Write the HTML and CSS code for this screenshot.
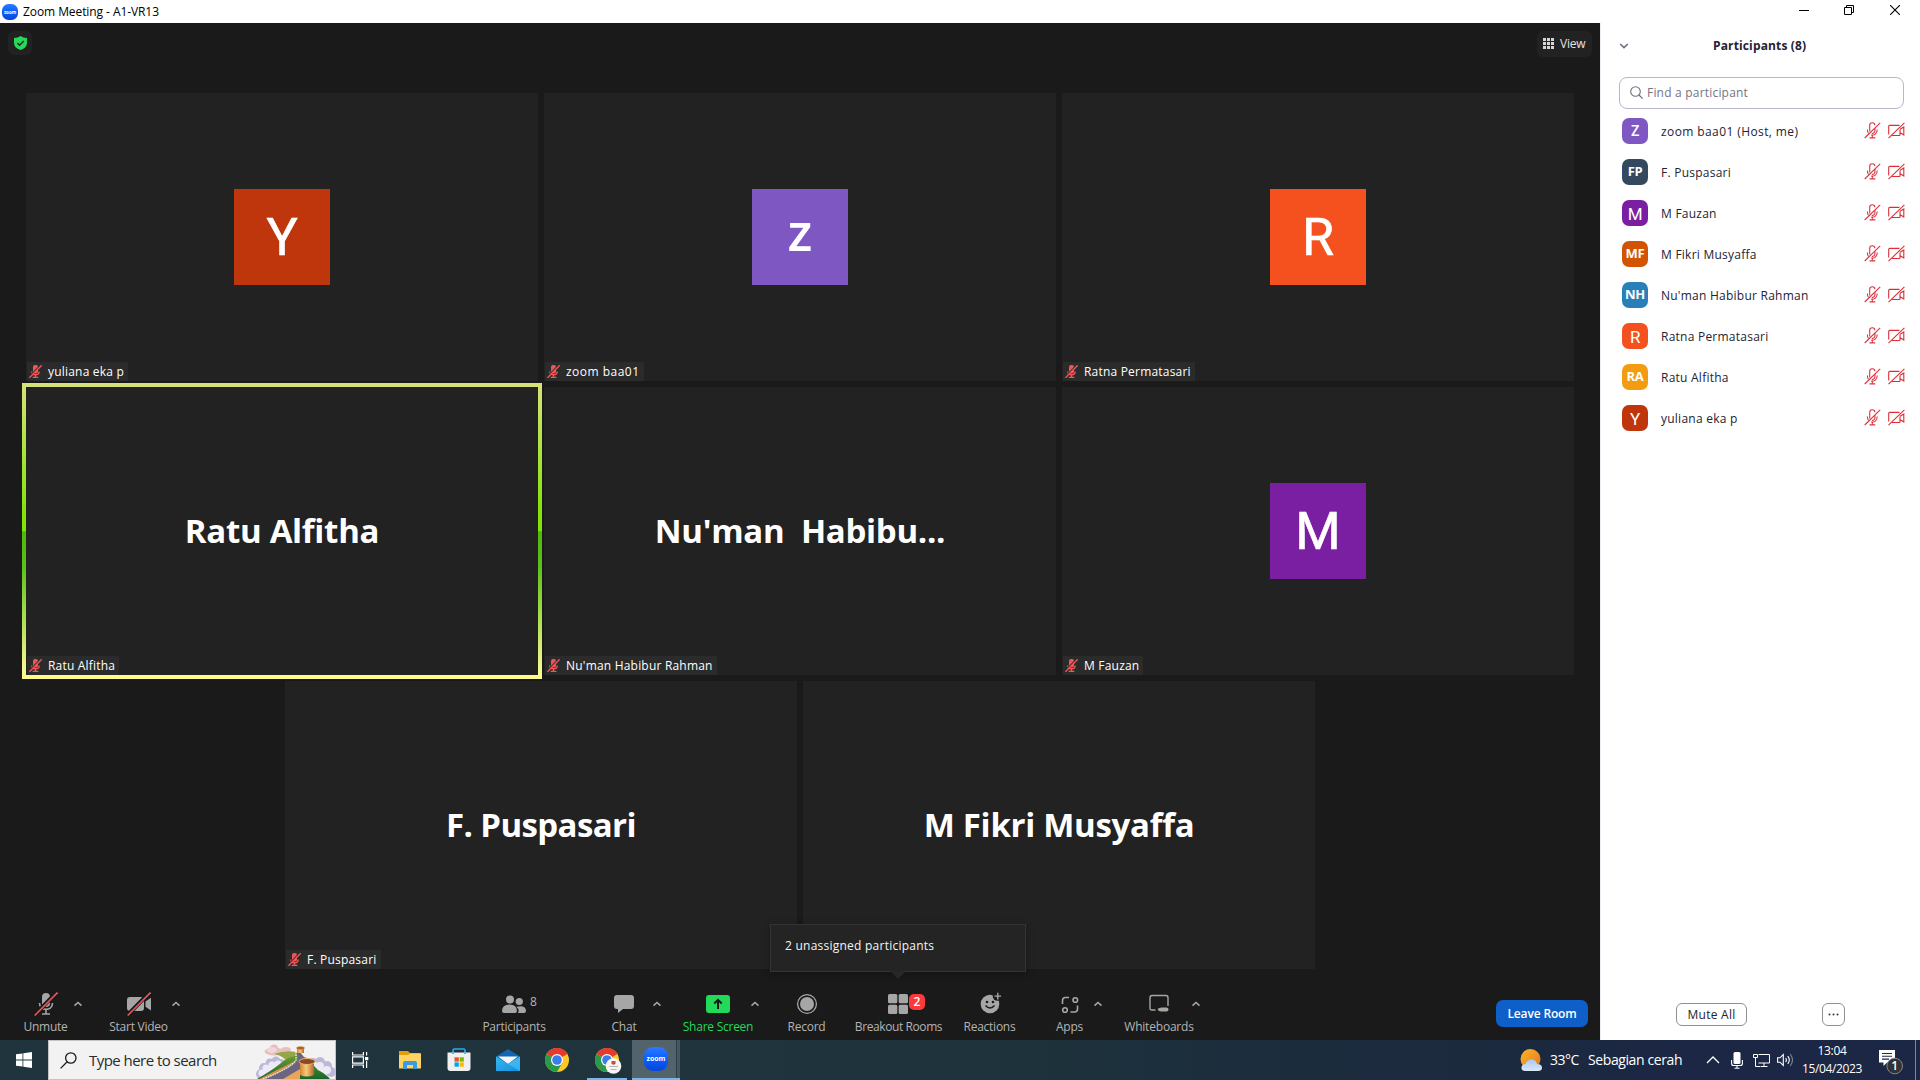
FILE: index.html
```html
<!DOCTYPE html>
<html lang="en">
<head>
<meta charset="utf-8">
<title>Zoom Meeting - A1-VR13</title>
<link rel="stylesheet" href="styles.css">
</head>
<body>
<svg class="defs" aria-hidden="true">
  <defs>
    <symbol id="mic-muted" viewBox="0 0 13 13">
      <rect x="4" y="0" width="5" height="8.500" rx="2" fill="#f25555"/>
      <path d="M2.800 6.500c0 4.400 7.400 4.400 7.400 0M6.500 9.500v3M3.600 12.400h5.800" fill="none" stroke="#f25555" stroke-width="1.400"/>
      <path d="M0.200 11.600L11.400 .2" stroke="#2b2b2b" stroke-width="1.200"/>
      <path d="M0.400 12.800L12.700 .3" stroke="#f25555" stroke-width="1.400"/>
    </symbol>
    <symbol id="mic-off" viewBox="0 0 17 17">
      <g fill="none" stroke="#dd3340" stroke-width="1.1">
        <path d="M5.700 9.500V3.300a2.600 2.600 0 0 1 5.200 0M10.900 6v3a2.600 2.600 0 0 1-3 2.400M3.400 7.500c0 2 .3 3 1.200 4M13.200 7.500c0 4.400-3 6.200-6 5.500M8.300 13v2.500M5.500 15.900h5.800"/>
        <path d="M.7 16L16.200 .9"/>
      </g>
    </symbol>
    <symbol id="cam-off" viewBox="0 0 17 17">
      <g fill="none" stroke="#dd2e35" stroke-width="1.100">
        <path d="M.7 12.500V4.400q0-1 1-1h9.800M12 7.500v5.500q0 .5-.6 .500H4M12.200 7.300l3.600-2.300v8l-3.600-2.200"/>
        <path d="M.5 16.200L16.400 .9"/>
      </g>
    </symbol>
    <symbol id="caret" viewBox="0 0 10 6"><path d="M1.500 4.600L5 1.500l3.500 3.100" fill="none" stroke="#a9a9a9" stroke-width="1.500"/></symbol>
    <symbol id="chrome" viewBox="0 0 24 24">
      <circle cx="12" cy="12" r="12" fill="#fdc928"/>
      <path d="M12 12L1.600 6A12 12 0 0 1 22.400 6Z" fill="#e33b2e"/>
      <path d="M12 6h10.400A12 12 0 0 0 12 0Z" fill="#e33b2e"/>
      <path d="M1.600 6A12 12 0 0 0 12 24l5.200-9L12 12Z" fill="#2a9a48"/>
      <circle cx="12" cy="12" r="6" fill="#fff"/>
      <circle cx="12" cy="12" r="4.800" fill="#3b7ded"/>
    </symbol>
    <linearGradient id="zoomBlue" x1="0" y1="0" x2="0" y2="1"><stop offset="0" stop-color="#2b7bff"/><stop offset=".5" stop-color="#0b5cff"/><stop offset="1" stop-color="#0846d6"/></linearGradient>
    <linearGradient id="mailBlue" x1="0" y1="0" x2="1" y2="1"><stop offset="0" stop-color="#35b8f1"/><stop offset="1" stop-color="#1490df"/></linearGradient>
    <linearGradient id="sun" x1="0" y1="0" x2="1" y2="1"><stop offset="0" stop-color="#f8b928"/><stop offset="1" stop-color="#ea7020"/></linearGradient>
    <linearGradient id="cloud" x1="0" y1="0" x2="0" y2="1"><stop offset="0" stop-color="#a9c9f6"/><stop offset="1" stop-color="#dbe8fb"/></linearGradient>
    <linearGradient id="tower" x1="0" y1="0" x2="1" y2="0"><stop offset="0" stop-color="#d58333"/><stop offset=".45" stop-color="#f8c978"/><stop offset="1" stop-color="#b96528"/></linearGradient>
    <linearGradient id="hill" x1="0" y1="0" x2="0" y2="1"><stop offset="0" stop-color="#6f9c35"/><stop offset="1" stop-color="#17672c"/></linearGradient>
  </defs>
</svg>

<header class="titlebar">
  <svg class="app-icon" viewBox="0 0 16 16"><rect width="16" height="16" rx="6.500" fill="url(#zoomBlue)"/><text x="8" y="9.600" class="app-icon-text" text-anchor="middle">zoom</text></svg>
  <span class="title">Zoom Meeting - A1-VR13</span>
  <div class="win-buttons">
    <svg width="10" height="10" viewBox="0 0 10 10"><path d="M0 5.500h10" stroke="#000"/></svg>
    <svg width="10" height="10" viewBox="0 0 10 10"><path d="M.5 2.500h7v7h-7zM2.500 2.500v-2h7v7h-2" fill="none" stroke="#000"/></svg>
    <svg width="10" height="10" viewBox="0 0 10 10"><path d="M0 0l10 10M10 0L0 10" stroke="#000" stroke-width="1.100"/></svg>
  </div>
</header>

<div class="body">
  <main class="stage">
    <div class="stage-head">
      <span class="chip shield"><svg width="13" height="14" viewBox="0 0 13 14"><path d="M6.500 0q2.500 2 6.500 2v5q0 4.800-6.500 7Q0 11.800 0 7V2q4 0 6.500-2z" fill="#26d959"/><path d="M3.400 7l2.200 2.200L9.800 5" fill="none" stroke="#1f2f22" stroke-width="1.500"/></svg></span>
      <span class="chip view"><svg width="11" height="11" viewBox="0 0 11 11" fill="#d6d6d6"><path d="M0 0h3v3H0zM4 0h3v3H4zM8 0h3v3H8zM0 4h3v3H0zM4 4h3v3H4zM8 4h3v3H8zM0 8h3v3H0zM4 8h3v3H4zM8 8h3v3H8z"/></svg>View</span>
    </div>

    <div class="gallery">
      <div class="row">
        <div class="tile"><span class="avatar yuliana">Y</span><span class="tag"><svg><use href="#mic-muted"/></svg>yuliana eka p</span></div>
        <div class="tile"><span class="avatar host">z</span><span class="tag wide"><svg><use href="#mic-muted"/></svg>zoom baa01</span></div>
        <div class="tile"><span class="avatar ratna">R</span><span class="tag"><svg><use href="#mic-muted"/></svg>Ratna Permatasari</span></div>
      </div>
      <div class="row">
        <div class="tile speaking"><span class="big">Ratu Alfitha</span><span class="tag"><svg><use href="#mic-muted"/></svg>Ratu Alfitha</span></div>
        <div class="tile"><span class="big">Nu'man  Habibu...</span><span class="tag"><svg><use href="#mic-muted"/></svg>Nu'man Habibur Rahman</span></div>
        <div class="tile"><span class="avatar fauzan">M</span><span class="tag"><svg><use href="#mic-muted"/></svg>M Fauzan</span></div>
      </div>
      <div class="row">
        <div class="tile"><span class="big tight">F. Puspasari</span><span class="tag"><svg><use href="#mic-muted"/></svg>F. Puspasari</span></div>
        <div class="tile"><span class="big">M Fikri Musyaffa</span></div>
      </div>
    </div>

    <nav class="toolbar">
      <div class="tool unmute">
        <svg width="24" height="24" viewBox="0 0 24 24"><rect x="8" y="1" width="8" height="14" rx="4" fill="#a6a6a6"/><path d="M5.500 11c0 8.500 13 8.500 13 0M12 17.500v4M8 22h8" fill="none" stroke="#a6a6a6" stroke-width="1.600"/><path d="M.7 23L22.500 .5" stroke="#1a1a1a" stroke-width="4"/><path d="M.7 23.500L23.500 .5" stroke="#e5565a" stroke-width="1.600"/></svg>
        <span>Unmute</span></div>
      <svg class="caret c12"><use href="#caret"/></svg>
      <div class="tool start">
        <svg width="24" height="24" viewBox="0 0 24 24"><rect x="0" y="5" width="17" height="14" rx="3" fill="#a6a6a6"/><path d="M18.500 9.500L24 5.800v12.600l-5.500-3.700z" fill="#a6a6a6"/><path d="M.7 23L22.500 .5" stroke="#1a1a1a" stroke-width="4"/><path d="M.7 23.500L23.500 .5" stroke="#e5565a" stroke-width="1.600"/></svg>
        <span>Start Video</span></div>
      <svg class="caret c10"><use href="#caret"/></svg>
      <div class="tool people">
        <svg width="24" height="24" viewBox="0 0 24 24" fill="#a6a6a6"><circle cx="8" cy="7.500" r="4"/><circle cx="17.300" cy="9.500" r="3.600"/><path d="M0 19q0-6.500 7.500-6.500T15 19q0 2-2 2H2q-2 0-2-2zM14.500 14.800Q24 12.800 24 19q0 2-2 2h-6q1.800-3-1.500-6.200z"/></svg>
        <b class="count">8</b>
        <span>Participants</span></div>
      <div class="tool chat">
        <svg width="24" height="24" viewBox="0 0 24 24"><path d="M5 3h14q3 0 3 3v8q0 3-3 3h-8l-5 4v-4H5q-3 0-3-3V6q0-3 3-3z" fill="#a6a6a6"/></svg>
        <span>Chat</span></div>
      <svg class="caret c22"><use href="#caret"/></svg>
      <div class="tool share">
        <svg width="24" height="24" viewBox="0 0 24 24"><rect y="3" width="24" height="18" rx="3" fill="#23d959"/><path d="M12 17V8.500M8.300 11.500L12 7.800l3.700 3.700" fill="none" stroke="#1a1a1a" stroke-width="2"/></svg>
        <span>Share Screen</span></div>
      <svg class="caret c4"><use href="#caret"/></svg>
      <div class="tool record">
        <svg width="24" height="24" viewBox="0 0 24 24"><circle cx="12" cy="12" r="9.400" fill="none" stroke="#a6a6a6" stroke-width="1.300"/><circle cx="12" cy="12" r="7" fill="#a6a6a6"/></svg>
        <span>Record</span></div>
      <div class="tool breakout">
        <svg width="24" height="24" viewBox="0 0 24 24" fill="#a6a6a6"><rect x="1" y="2" width="9.300" height="9.300" rx="1.500"/><rect x="11.700" y="2" width="9.300" height="9.300" rx="1.500"/><rect x="1" y="12.700" width="9.300" height="9.300" rx="1.500"/><rect x="11.700" y="12.700" width="9.300" height="9.300" rx="1.500"/></svg>
        <b class="badge">2</b>
        <span>Breakout Rooms</span>
        <div class="tooltip">2 unassigned participants</div></div>
      <div class="tool reactions">
        <svg width="24" height="24" viewBox="0 0 24 24"><circle cx="12" cy="12" r="9.300" fill="#a6a6a6"/><circle cx="19.500" cy="4" r="4.800" fill="#1a1a1a"/><path d="M19.800 .8v6.600M16.500 4.100h6.600" stroke="#a6a6a6" stroke-width="1.400"/><circle cx="9" cy="10" r="1.300" fill="#1a1a1a"/><circle cx="15" cy="10" r="1.300" fill="#1a1a1a"/><path d="M7.500 13.500q4.500 5 9 0" fill="none" stroke="#1a1a1a" stroke-width="1.500"/></svg>
        <span>Reactions</span></div>
      <div class="tool apps">
        <svg width="24" height="24" viewBox="0 0 24 24" fill="none" stroke="#a6a6a6" stroke-width="1.600"><path d="M4.500 12V8.500Q4.500 5.500 7.500 5.500H11M19.500 13.500V17q0 3-3 3h-4"/><circle cx="17.300" cy="8" r="2.300"/><circle cx="7" cy="18" r="2.300"/></svg>
        <span>Apps</span></div>
      <svg class="caret c24"><use href="#caret"/></svg>
      <div class="tool boards">
        <svg width="24" height="24" viewBox="0 0 24 24"><path d="M8.500 18H5q-2 0-2-2V6q0-2.500 2-2.500h14q2 0 2 2.500v8" fill="none" stroke="#a6a6a6" stroke-width="1.400"/><path d="M10.500 17q1.500-1.300 4-1.500h5q2 0 2 2t-2 2H14q-2.500 0-3.500-2.500z" fill="#a6a6a6"/></svg>
        <span>Whiteboards</span></div>
      <svg class="caret c2"><use href="#caret"/></svg>
      <button class="leave">Leave Room</button>
    </nav>
  </main>

  <aside class="panel">
    <div class="panel-head">
      <svg width="10" height="6" viewBox="0 0 10 6"><path d="M1.200 1L5 4.600 8.800 1" fill="none" stroke="#6e6e82" stroke-width="1.600"/></svg>
      <h2>Participants (8)</h2>
    </div>
    <div class="search">
      <svg width="13" height="13" viewBox="0 0 13 13"><circle cx="5.500" cy="5.500" r="4.800" fill="none" stroke="#6e6e82" stroke-width="1.100"/><path d="M9 9l3.600 3.600" stroke="#6e6e82" stroke-width="1.200"/></svg>
      <span>Find a participant</span>
    </div>
    <ul class="people-list">
      <li><i class="mini host">Z</i><span class="me">zoom baa01 (Host, me)</span><svg><use href="#mic-off"/></svg><svg><use href="#cam-off"/></svg></li>
      <li><i class="mini fp">FP</i><span>F. Puspasari</span><svg><use href="#mic-off"/></svg><svg><use href="#cam-off"/></svg></li>
      <li><i class="mini photo fauzan">M</i><span>M Fauzan</span><svg><use href="#mic-off"/></svg><svg><use href="#cam-off"/></svg></li>
      <li><i class="mini mf">MF</i><span>M Fikri Musyaffa</span><svg><use href="#mic-off"/></svg><svg><use href="#cam-off"/></svg></li>
      <li><i class="mini nh">NH</i><span>Nu'man Habibur Rahman</span><svg><use href="#mic-off"/></svg><svg><use href="#cam-off"/></svg></li>
      <li><i class="mini photo ratna">R</i><span>Ratna Permatasari</span><svg><use href="#mic-off"/></svg><svg><use href="#cam-off"/></svg></li>
      <li><i class="mini ra">RA</i><span>Ratu Alfitha</span><svg><use href="#mic-off"/></svg><svg><use href="#cam-off"/></svg></li>
      <li><i class="mini photo yuliana">Y</i><span>yuliana eka p</span><svg><use href="#mic-off"/></svg><svg><use href="#cam-off"/></svg></li>
    </ul>
    <div class="panel-foot">
      <button class="mute-all">Mute All</button>
      <button class="more"><svg width="11" height="3" viewBox="0 0 11 3" fill="#333344"><circle cx="1.500" cy="1.500" r="1"/><circle cx="5.500" cy="1.500" r="1"/><circle cx="9.500" cy="1.500" r="1"/></svg></button>
    </div>
  </aside>
</div>

<footer class="taskbar">
  <span class="start-btn"><svg width="16" height="16" viewBox="0 0 16 16" fill="#fff"><path d="M0 2.300L6.500 1.400V7.600H0zM7.300 1.300L16 0v7.600H7.300zM0 8.400h6.500v6.200L0 13.700zM7.300 8.400H16V16l-8.700-1.300z"/></svg></span>
  <div class="taskbar-search">
    <svg width="17" height="17" viewBox="0 0 17 17" fill="none" stroke="#1b1b1b" stroke-width="1.300"><circle cx="10.800" cy="6" r="5.200"/><path d="M7.200 9.800L.6 16.400"/></svg>
    <span>Type here to search</span>
    <svg class="art" width="80" height="38" viewBox="0 0 80 38">
      <g fill="#e6bfc2"><ellipse cx="19" cy="10.500" rx="9.500" ry="4"/><circle cx="19" cy="7.500" r="4"/><ellipse cx="31" cy="8.500" rx="5" ry="2.500"/></g>
      <g fill="#f0d6d6"><ellipse cx="17" cy="9" rx="5" ry="3"/></g>
      <g fill="#bdb8d8"><circle cx="6" cy="33" r="5"/><circle cx="9" cy="27" r="5"/><circle cx="15" cy="22" r="4.500"/><circle cx="21" cy="20" r="4.500"/><circle cx="26" cy="23" r="5"/><circle cx="58" cy="21" r="4"/><circle cx="65" cy="21" r="5"/><circle cx="72" cy="25" r="5"/><circle cx="76" cy="31" r="5"/></g>
      <g fill="#eceaf6"><circle cx="7" cy="32" r="3.500"/><circle cx="11" cy="27" r="3.500"/><circle cx="17" cy="24" r="3.500"/><circle cx="23" cy="23" r="3.500"/><circle cx="13" cy="31" r="3"/><circle cx="65" cy="25" r="4"/><circle cx="60" cy="24" r="3"/><circle cx="72" cy="29" r="4"/></g>
      <path d="M19 13q14-5 26-1l-2 7-10 3q-4-7-14-9z" fill="#96a545"/>
      <path d="M2 38q14-8 24-16 8-7 19-8 12 8 18 15 8 4 12 9z" fill="url(#hill)"/>
      <path d="M4 38L40 20l4 3-22 15z" fill="#d3924e"/>
      <path d="M10 38Q38 26 43 19q1-2-2-7l4-1 4 5 6 2-1 4-6 1-6 7-13 8z" fill="#6a6682"/>
      <path d="M8 38Q36 27 41 19V11" fill="none" stroke="#e4e0ea" stroke-width="1.500" stroke-dasharray="1.500 1"/>
      <path d="M42 7h7v5h-7z" fill="url(#tower)"/><ellipse cx="45.500" cy="7" rx="4" ry="1.500" fill="#a95c28" stroke="#e2a158" stroke-width=".6"/>
      <path d="M45 21h14v13q-7 3-14 0z" fill="url(#tower)"/><ellipse cx="52" cy="20.500" rx="8" ry="3" fill="#874a29" stroke="#eeb870"/>
      <path d="M28 38l17-10v10z" fill="#e7a658"/>
    </svg>
  </div>
  <div class="apps-strip">
    <span class="task"><svg width="17" height="16" viewBox="0 0 17 16" fill="none" stroke="#fff" stroke-width="1.200"><path d="M.6 0v3h10.800V0M.6 16v-3h10.800v3M.6 4.800h10.800v6.400H.6zM14.600 0v3.500M14.600 9v7"/><path d="M13 5h3.300v3.200H13z" fill="#fff" stroke="none"/></svg></span>
    <span class="task"><svg width="22" height="20" viewBox="0 0 22 20"><path d="M0 1h9l2 2h10.500v5H0z" fill="#e0a009"/><path d="M0 5h9l2-1.500h11V18.500H0z" fill="#fdd365"/><path d="M4 19v-6q0-2 2-2h10q2 0 2 2v6h-4v-4H8v4z" fill="#3a9be0"/></svg></span>
    <span class="task"><svg width="24" height="24" viewBox="0 0 24 24"><path d="M6 6V2.500Q6 1 7.500 1h9Q18 1 18 2.500V6" fill="none" stroke="#22aef0" stroke-width="1.700"/><path d="M.5 4.500h23V20q0 3-3 3h-17q-3 0-3-3z" fill="#f0f0f0"/><path d="M7.500 9.300h4.300v4.300H7.500z" fill="#f25022"/><path d="M12.600 9.300h4.300v4.300h-4.300z" fill="#7fba00"/><path d="M7.500 14.400h4.300v4.300H7.500z" fill="#00a4ef"/><path d="M12.600 14.400h4.300v4.300h-4.300z" fill="#ffb900"/><path d="M6 4.500V6M18 4.500V6" stroke="#22aef0" stroke-width="1.700"/></svg></span>
    <span class="task"><svg width="24" height="24" viewBox="0 0 24 24"><path d="M0 8.500L12 1l12 7.500V16H0z" fill="#1267b4"/><path d="M2 8.500h20L12 16z" fill="#f6f6f6"/><path d="M0 8.500L12 16l12-7.500V23H0z" fill="url(#mailBlue)"/><path d="M12 16l12 7V8.500z" fill="#4cc4f4" opacity=".6"/></svg></span>
    <span class="task"><svg width="24" height="24"><use href="#chrome"/></svg></span>
    <span class="task open"><svg width="27" height="26" viewBox="0 0 27 26"><use href="#chrome" width="24" height="24"/><circle cx="18.500" cy="18" r="7.800" fill="#f7f5f3"/><path d="M16.500 13h4v2.500q-2 2.500-4 0z" fill="#c5502e"/><path d="M14 18.500h9M15.500 21.500h6" stroke="#b5b5b5"/></svg></span>
    <span class="task active"><svg width="24" height="24" viewBox="0 0 24 24"><rect width="24" height="24" rx="9" fill="url(#zoomBlue)"/><text x="12" y="13.800" class="task-zoom" text-anchor="middle">zoom</text></svg></span>
  </div>
  <div class="tray">
    <svg class="weather" width="23" height="23" viewBox="0 0 23 23"><circle cx="10.500" cy="10" r="10" fill="url(#sun)"/><path d="M5.500 22q-4.500 0-4-4 .5-3 4-3 1.500-4.500 6-4.500 4.500 0 5.500 4.500 5 0 5 3.700 0 3.300-4 3.300z" fill="url(#cloud)"/></svg>
    <span class="temp">33°C</span><span class="sky">Sebagian cerah</span>
    <svg class="up" width="14" height="8" viewBox="0 0 14 8"><path d="M1 7l6-6 6 6" fill="none" stroke="#fff" stroke-width="1.300"/></svg>
    <svg class="mic" width="12" height="17" viewBox="0 0 12 17"><rect x="2.500" y="0" width="7" height="12" rx="1.500" fill="#fff"/><path d="M.6 8v3.500q0 2 2 2h6.800q2 0 2-2V8M6 13.500V16M3.500 16.200h5" fill="none" stroke="#fff" stroke-width="1.100"/></svg>
    <svg class="net" width="17" height="14" viewBox="0 0 17 14" fill="none" stroke="#fff"><path d="M5.500 1.500h11v8.500h-11M11 10v3M7.500 13.500h7M.5 1.500h4v3h-4zM2.500 4.500v9H7"/></svg>
    <svg class="sound" width="17" height="14" viewBox="0 0 17 14" fill="none" stroke="#fff" stroke-width="1.100"><path d="M.6 4.800H3L6.300 1.500v11L3 9.200H.6zM8.600 5q1.600 2 0 4M10.800 3.200q3 3.800 0 7.600"/><path d="M13.200 1q4.600 6 0 12" opacity=".45"/></svg>
    <div class="clock"><span>13:04</span><span>15/04/2023</span></div>
    <svg class="notes" width="26" height="26" viewBox="0 0 26 26"><path d="M0 1h16v12.500H8L4.500 17v-3.500H0z" fill="#fff"/><path d="M3 4.500h10M3 7.300h10M3 10.100h7" stroke="#1c2843" stroke-width="1.100"/><circle cx="15.700" cy="17" r="7.800" fill="#303236" stroke="#85878b"/><text x="15.700" y="21.300" class="note-count" text-anchor="middle">1</text></svg>
    <i class="peek"></i>
  </div>
</footer>
</body>
</html>
```
FILE: styles.css
```css
* { box-sizing: border-box; }
body {
  margin: 0;
  width: 1920px;
  height: 1080px;
  overflow: hidden;
  display: flex;
  flex-direction: column;
  font-family: "Open Sans", "Noto Sans", sans-serif;
  font-size: 12px;
  line-height: 16px;
  background: #fff;
}
svg { display: block; flex: none; }
button { font: inherit; padding: 0; margin: 0; }
.defs { position: absolute; width: 0; height: 0; }

/* title bar */
.titlebar { height: 23px; flex: none; display: flex; align-items: center; padding-left: 2px; color: #000; }
.app-icon { width: 16px; height: 16px; }
.app-icon-text { font-size: 4.500px; font-weight: 700; fill: #fff; }
.title { margin-left: 5px; letter-spacing: -.08px; }
.win-buttons { margin-left: auto; display: flex; gap: 36px; padding: 0 20px 3px 0; }
.win-buttons svg:nth-child(2) { margin-left: -1px; }

.body { flex: 1; display: flex; min-height: 0; }
.stage { width: 1600px; background: #1a1a1a; display: flex; flex-direction: column; }

.stage-head { height: 70px; padding: 8px 8px 0; display: flex; justify-content: space-between; align-items: flex-start; }
.chip { display: flex; align-items: center; background: #222; border-radius: 6px; color: #e2e2e2; }
.shield { width: 24px; height: 24px; justify-content: center; }
.view { height: 26px; width: 55px; padding: 0 0 1px 6px; gap: 6px; letter-spacing: -.25px; }

/* gallery */
.gallery { display: flex; flex-direction: column; gap: 6px; }
.row { display: flex; justify-content: center; gap: 6px; height: 288px; }
.tile { position: relative; width: 512px; background: #222; display: flex; align-items: center; justify-content: center; }
.avatar { width: 96px; height: 96px; color: #fff; font: 400 52px/98px Roboto, sans-serif; -webkit-text-stroke: .6px #fff; text-align: center; }
.avatar.host { font: 600 52px/84px "Open Sans", sans-serif; -webkit-text-stroke: 0; }
.yuliana { background: #bf360c; }
.host { background: #7e57c2; }
.ratna { background: #f4511e; }
.fauzan { background: #7b1fa2; }
.big { color: #fff; font-weight: 700; font-size: 33px; line-height: 40px; letter-spacing: -.3px; white-space: pre; }
.big.tight { letter-spacing: -.6px; }
.tag { position: absolute; left: 1px; bottom: 0; height: 19px; display: flex; align-items: center; padding: 0 4px 0 2px; gap: 6px; background: #2b2b2b; color: #fff; white-space: nowrap; letter-spacing: .2px; }
.tag.wide { letter-spacing: .48px; }
.tag svg { width: 13px; height: 13px; }
.speaking::before {
  content: "";
  position: absolute;
  inset: -4px;
  padding: 4px;
  background: linear-gradient(#d6e27a 0, #cfe26c 5%, #86e30a 43%, #80e600 50%, #4fb80f 50.200%, #5cc01a 62%, #a5dc4c 78%, #f4f78c 96%, #fffb8b);
  -webkit-mask: linear-gradient(#000 0 0) content-box exclude, linear-gradient(#000 0 0);
  mask: linear-gradient(#000 0 0) content-box exclude, linear-gradient(#000 0 0);
}

/* meeting controls */
.toolbar { flex: 1; display: flex; align-items: flex-start; padding: 23px 0 0 19px; color: #b4b4b4; }
.tool { position: relative; display: flex; flex-direction: column; align-items: center; gap: 2px; white-space: nowrap; height: 46px; }
.tool > span { line-height: 17px; letter-spacing: -.25px; }
.unmute { width: 53px; }
.start { width: 65px; margin-left: 22px; }
.people { width: 70px; margin-left: 298px; }
.chat { width: 44px; margin-left: 53px; }
.share { width: 71px; margin-left: 14px; color: #23d959; }
.share > span { margin-left: 1px; }
.record { width: 41px; margin-left: 29px; }
.breakout { width: 91px; margin-left: 26px; }
.breakout > span { letter-spacing: -.4px; }
.reactions { width: 55px; margin-left: 18px; }
.apps { width: 33px; margin-left: 36px; }
.boards { width: 72px; margin-left: 13px; }
.boards > span { letter-spacing: -.2px; }
.caret { height: 6px; margin-top: 9px; overflow: visible; }
.c2 { width: 10px; margin-left: -4px; margin-right: -4px; }
.c4 { width: 10px; margin-left: -3px; margin-right: -3px; }
.c10 { width: 10px; }
.c12 { width: 10px; margin-left: 1px; margin-right: 1px; }
.c22 { width: 10px; margin-left: 6px; margin-right: 6px; }
.c24 { width: 10px; margin-left: 7px; margin-right: 7px; }
.count { position: absolute; left: 51px; top: 2px; font-weight: 400; }
.badge { position: absolute; left: 56px; top: 2px; width: 16px; height: 16px; border-radius: 5px; background: #fb3b3b; color: #fff; text-align: center; font-weight: 600; line-height: 15px; }
.tooltip { position: absolute; left: -83px; top: -68px; width: 256px; height: 48px; padding: 13px 14px; background: #242424; border: 1px solid #343434; color: #f5f5f5; letter-spacing: .24px; box-shadow: 0 2px 8px rgba(0,0,0,.3); }
.tooltip::after { content: ""; position: absolute; left: 119px; top: 46px; border: 8px solid transparent; border-bottom: 0; border-top-color: #272727; }
.leave { margin-left: 299px; margin-top: 8px; width: 92px; height: 27px; border: 0; border-radius: 7px; background: #0e5fc7; color: #fff; font-weight: 600; line-height: 25px; letter-spacing: -.15px; }

/* participants panel */
.panel { width: 320px; border-left: 1px solid #ececf2; display: flex; flex-direction: column; color: #232333; }
.panel-head { height: 54px; padding: 5px 0 13px 18px; display: flex; align-items: center; }
.panel-head h2 { margin: 0 0 0 84px; font-size: 12px; line-height: 16px; font-weight: 700; letter-spacing: .14px; }
.search { margin-left: 18px; width: 285px; height: 32px; border: 1px solid #b9b6cd; border-radius: 8px; display: flex; align-items: center; padding: 0 0 1px 10px; gap: 4px; color: #747487; letter-spacing: .2px; }
.people-list { list-style: none; margin: 1px 0 0; padding: 0 15px 0 21px; }
.people-list li { height: 41px; display: flex; align-items: center; }
.people-list span { flex: 1; margin-left: 13px; padding-top: 2px; white-space: nowrap; letter-spacing: .24px; }
.people-list .me { letter-spacing: .4px; }
.people-list svg { width: 17px; height: 17px; margin-left: 7px; }
.mini { width: 26px; height: 26px; border-radius: 7px; color: #fff; font: 700 13px/25px "Open Sans", sans-serif; letter-spacing: -.3px; text-align: center; }
.mini.host { font: 500 14px/27px Roboto, sans-serif; }
.mini.photo { font: 400 17px/28px Roboto, sans-serif; }
.fp { background: #34495e; }
.mf { background: #d35400; }
.nh { background: #2980b9; }
.ra { background: #f39c12; }
.panel-foot { margin-top: auto; padding: 0 0 14px 75px; display: flex; gap: 75px; }
.panel-foot button { height: 23px; border: 1px solid #909096; border-radius: 6px; background: #fff; color: #232333; }
.mute-all { width: 71px; line-height: 21px; letter-spacing: .25px; }
.more { width: 23px; display: flex; align-items: center; justify-content: center; }

/* windows taskbar */
.taskbar { height: 40px; flex: none; display: flex; background: linear-gradient(90deg, #1f343c 0, #1e333b 50%, #1c2e3d 64%, #1b2a3d 76%, #1b2744 88%, #1b2744); color: #fff; }
.start-btn { width: 48px; display: flex; align-items: center; justify-content: center; }
.taskbar-search { width: 288px; background: #f2f2f2; border: 1px solid #c4c4c4; display: flex; align-items: center; padding-left: 11px; color: #2b2b2b; font-size: 15px; }
.taskbar-search span { margin-left: 12px; width: 130px; white-space: nowrap; letter-spacing: -.54px; }
.taskbar-search .art { margin-left: auto; }
.apps-strip { display: flex; }
.task { width: 49px; display: flex; align-items: center; justify-content: center; }
.apps-strip .task:first-child { width: 49px; padding-right: 1px; }
.open { border-bottom: 2px solid #76b9ed; width: 40px; margin: 0 5px 0 6px; padding: 3px 0 0 2px; }
.active { width: 48px; border-bottom: 2px solid #76b9ed; background: linear-gradient(90deg, #52636b 44px, #2c3f47 44px, #2c3f47 45px, #45575f 45px); }
.task-zoom { font-size: 7px; font-weight: 700; fill: #fff; }
.tray { margin-left: auto; display: flex; align-items: center; font-size: 14px; white-space: nowrap; }
.temp { width: 38px; margin-left: 7px; letter-spacing: -.5px; }
.sky { width: 94px; letter-spacing: -.4px; }
.up { margin-left: 24px; }
.mic { margin-left: 11px; }
.net { margin-left: 10px; }
.sound { margin-left: 7px; }
.clock { display: flex; flex-direction: column; align-items: center; gap: 1px; width: 60px; margin-left: 8px; font-size: 12px; line-height: 17px; letter-spacing: -.35px; margin-top: -2px; }
.notes { margin-left: 17px; margin-top: 4px; }
.note-count { font-size: 12px; font-weight: 600; fill: #fff; }
.peek { width: 1px; height: 40px; background: #7e8697; margin: 0 4px 0 10px; }
```
